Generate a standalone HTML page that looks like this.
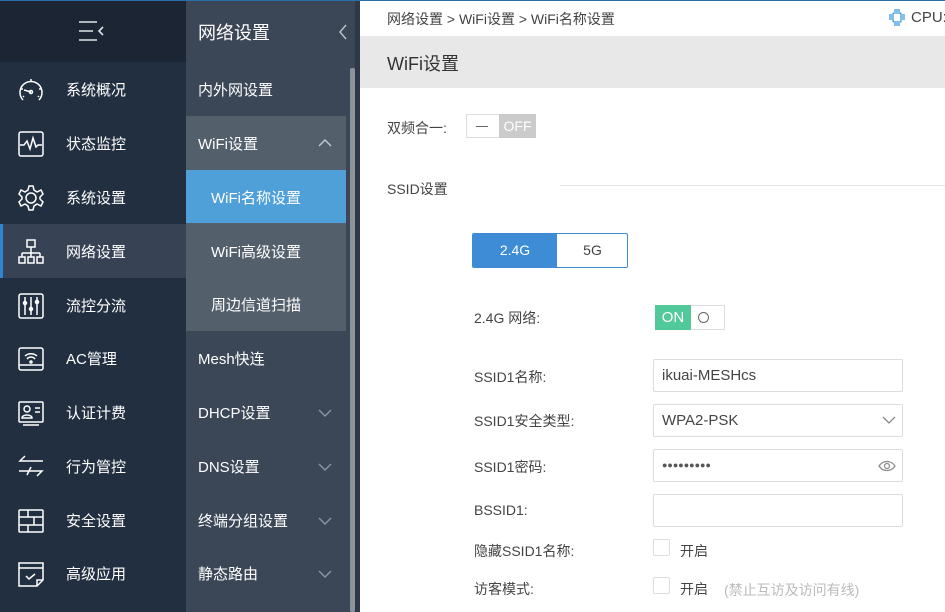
<!DOCTYPE html>
<html><head><meta charset="utf-8"><style>
*{margin:0;padding:0;box-sizing:border-box}
body{width:945px;height:612px;overflow:hidden;font-family:"Liberation Sans","Noto Sans CJK SC",sans-serif;position:relative;background:#fff}
.topline{position:absolute;left:0;top:0;width:945px;height:1px;background:#2a6fa8;z-index:5}
.c1{position:absolute;left:0;top:0;width:186px;height:612px;background:#222f40}
.c1h{position:absolute;left:0;top:0;width:186px;height:62px;background:#1b2534}
.r{position:absolute;left:0;width:186px;height:54px;color:#fff;font-size:15px;line-height:58px;padding-left:66px}
.r svg{position:absolute;left:17px;top:14px}
.sel{background:#374354;border-left:3px solid #2f86d0}
.c2{position:absolute;left:186px;top:0;width:174px;height:612px;background:#3b4656}
.s{position:absolute;left:0;width:160px;height:54px;color:#fff;font-size:15px;line-height:58px;padding-left:12px}
.s .ch{position:absolute;right:14px;top:20px}
.sb{position:absolute;left:350px;top:68px;width:5px;height:544px;background:#8d939a;border-radius:2px}
.main{position:absolute;left:360px;top:0;width:585px;height:612px;background:#fff;color:#333}
.lbl{position:absolute;font-size:14px;color:#444}
.inp{position:absolute;left:293px;width:250px;height:33px;border:1px solid #dcdcdc;border-radius:2px;font-size:15px;color:#444;line-height:31px;padding-left:8px}
</style></head><body>
<div class="topline"></div>
<div class="c1"></div><div class="c1h"></div>
<svg style="position:absolute;left:78px;top:20px" width="28" height="22" viewBox="0 0 28 22" fill="none" stroke="#dfe3e8" stroke-width="1.6"><path d="M1 2h18M1 11h14M1 20h18M25 7l-4 4 4 4"/></svg>
<div class="r" style="top:62px"><svg width="28" height="28" viewBox="0 0 28 28" fill="none" stroke="#fff" stroke-width="1.5"><path d="M6 24A11 11 0 1 1 22 24"/><path d="M14 3v3M4 13h2M22 13h2M7 20l-1 1M21 20l1 1M14 16L7 14"/><circle cx="14" cy="16" r="1.5"/></svg>系统概况</div>
<div class="r" style="top:116px"><svg width="28" height="28" viewBox="0 0 28 28" fill="none" stroke="#fff" stroke-width="1.5"><rect x="2" y="2" width="24" height="24" rx="2"/><path d="M3 15h4l3-4 3 8 3-11 3 9 2-2h4"/></svg>状态监控</div>
<div class="r" style="top:170px"><svg width="28" height="28" viewBox="0 0 28 28" fill="none" stroke="#fff" stroke-width="1.5"><circle cx="14" cy="14" r="5"/><path d="M12 2h4l1 4 3 2 4-2 2 4-3 3v2l3 3-2 4-4-2-3 2-1 4h-4l-1-4-3-2-4 2-2-4 3-3v-2L2 10l2-4 4 2 3-2z"/></svg>系统设置</div>
<div class="r sel" style="top:224px;padding-left:63px"><svg style="left:14px" width="28" height="28" viewBox="0 0 28 28" fill="none" stroke="#fff" stroke-width="1.5"><rect x="10" y="2" width="8" height="7"/><path d="M14 9v6M5 15h18M5 15v4M14 15v4M23 15v4"/><rect x="2" y="19" width="6" height="6"/><rect x="11" y="19" width="6" height="6"/><rect x="20" y="19" width="6" height="6"/></svg>网络设置</div>
<div class="r" style="top:278px"><svg width="28" height="28" viewBox="0 0 28 28" fill="none" stroke="#fff" stroke-width="1.5"><rect x="2" y="2" width="24" height="24" rx="2"/><path d="M8 5v18M14 5v18M20 5v18"/><circle cx="8" cy="11" r="1.5"/><circle cx="14" cy="17" r="1.5"/><circle cx="20" cy="10" r="1.5"/></svg>流控分流</div>
<div class="r" style="top:331px"><svg width="28" height="28" viewBox="0 0 28 28" fill="none" stroke="#fff" stroke-width="1.5"><rect x="2" y="3" width="24" height="22" rx="2"/><path d="M2 20h24M8 11a9 9 0 0 1 12 0M10 14a5 5 0 0 1 8 0"/><circle cx="14" cy="17" r="1"/></svg>AC管理</div>
<div class="r" style="top:385px"><svg width="28" height="28" viewBox="0 0 28 28" fill="none" stroke="#fff" stroke-width="1.5"><rect x="2" y="3" width="24" height="20" rx="1"/><circle cx="10" cy="10" r="3"/><path d="M5 19c0-4 10-4 10 0zM18 9h5M18 13h5M6 26h16"/></svg>认证计费</div>
<div class="r" style="top:439px"><svg width="28" height="28" viewBox="0 0 28 28" fill="none" stroke="#fff" stroke-width="1.5"><path d="M26 8H3l5-5M2 18h23l-5 5M14 14l-4 8"/></svg>行为管控</div>
<div class="r" style="top:493px"><svg width="28" height="28" viewBox="0 0 28 28" fill="none" stroke="#fff" stroke-width="1.5"><rect x="2" y="3" width="24" height="22" rx="1"/><path d="M2 10h24M2 18h24M11 3v7M17 10v8M11 18v7"/></svg>安全设置</div>
<div class="r" style="top:546px"><svg width="28" height="28" viewBox="0 0 28 28" fill="none" stroke="#fff" stroke-width="1.5"><path d="M2 3h24v17l-6 6H2z M2 8h24M20 26v-6h6M9 16l3 3 6-5"/></svg>高级应用</div>

<div class="c2"></div>
<div style="position:absolute;left:186px;top:116px;width:160px;height:215px;background:#545f6c"></div>
<div style="position:absolute;left:186px;top:170px;width:160px;height:53px;background:#4f9fd9"></div>
<div class="s" style="left:186px;top:4px;font-size:18px">网络设置<svg class="ch" style="top:20px;right:-2px" width="10" height="16" viewBox="0 0 10 16" fill="none" stroke="#bfc5cc" stroke-width="1.4"><path d="M8 1L2 8l6 7"/></svg></div>
<div class="s" style="left:186px;top:62px">内外网设置</div>
<div class="s" style="left:186px;top:116px">WiFi设置<svg class="ch" style="top:22px" width="14" height="9" viewBox="0 0 14 9" fill="none" stroke="#c7ccd2" stroke-width="1.4"><path d="M1 8l6-6 6 6"/></svg></div>
<div class="s" style="left:186px;top:170px;padding-left:25px">WiFi名称设置</div>
<div class="s" style="left:186px;top:224px;padding-left:25px">WiFi高级设置</div>
<div class="s" style="left:186px;top:277px;padding-left:25px">周边信道扫描</div>
<div class="s" style="left:186px;top:331px">Mesh快连</div>
<div class="s" style="left:186px;top:385px">DHCP设置<svg class="ch" style="top:24px" width="14" height="9" viewBox="0 0 14 9" fill="none" stroke="#8d96a1" stroke-width="1.4"><path d="M1 1l6 6 6-6"/></svg></div>
<div class="s" style="left:186px;top:439px">DNS设置<svg class="ch" style="top:24px" width="14" height="9" viewBox="0 0 14 9" fill="none" stroke="#8d96a1" stroke-width="1.4"><path d="M1 1l6 6 6-6"/></svg></div>
<div class="s" style="left:186px;top:493px">终端分组设置<svg class="ch" style="top:24px" width="14" height="9" viewBox="0 0 14 9" fill="none" stroke="#8d96a1" stroke-width="1.4"><path d="M1 1l6 6 6-6"/></svg></div>
<div class="s" style="left:186px;top:546px">静态路由<svg class="ch" style="top:24px" width="14" height="9" viewBox="0 0 14 9" fill="none" stroke="#8d96a1" stroke-width="1.4"><path d="M1 1l6 6 6-6"/></svg></div>
<div class="sb"></div>
<div style="position:absolute;left:355px;top:0;width:5px;height:612px;background:#2e3947"></div>

<div class="main">
<div style="position:absolute;left:27px;top:9px;font-size:14px;color:#444">网络设置 &gt; WiFi设置 &gt; WiFi名称设置</div>
<svg style="position:absolute;left:528px;top:8px" width="18" height="20" viewBox="0 0 18 20" fill="none" stroke="#3b9be0" stroke-width="1.3"><rect x="5" y="5" width="8" height="9" rx="1"/><path d="M7 1v3M9 1v3M11 1v3M7 15v3M9 15v3M11 15v3M1 7h3M1 9h3M1 11h3M14 7h3M14 9h3M14 11h3"/></svg>
<div style="position:absolute;left:551px;top:9px;font-size:15px;color:#444">CPU:</div>
<div style="position:absolute;left:0;top:36px;width:585px;height:52px;background:#e8e8e8"></div>
<div style="position:absolute;left:27px;top:50px;font-size:18px;color:#333">WiFi设置</div>
<div class="lbl" style="left:27px;top:118px">双频合一:</div>
<div style="position:absolute;left:106px;top:114px;width:70px;height:24px;border:1px solid #ddd;background:#fff"><div style="position:absolute;left:9px;top:11px;width:12px;height:1px;background:#666"></div><div style="position:absolute;left:32px;top:-1px;width:37px;height:24px;background:#cbcbcb;color:#fff;font-size:14px;line-height:24px;text-align:center">OFF</div></div>
<div class="lbl" style="left:27px;top:179px">SSID设置</div>
<div style="position:absolute;left:200px;top:185px;width:385px;height:1px;background:#e4e4e4"></div>
<div style="position:absolute;left:112px;top:233px;width:156px;height:35px;border:1px solid #3e8ad5;border-radius:2px;overflow:hidden"><div style="position:absolute;left:0;top:0;width:84px;height:33px;background:#3f8cd6;color:#fff;font-size:14px;line-height:33px;text-align:center">2.4G</div><div style="position:absolute;left:84px;top:0;width:71px;height:33px;color:#444;font-size:14px;line-height:33px;text-align:center">5G</div></div>
<div class="lbl" style="left:114px;top:308px">2.4G 网络:</div>
<div style="position:absolute;left:295px;top:305px;width:70px;height:25px;border:1px solid #ddd"><div style="position:absolute;left:-1px;top:-1px;width:36px;height:25px;background:#52c99a;color:#fff;font-size:15px;line-height:25px;text-align:center">ON</div><div style="position:absolute;left:42px;top:6px;width:11px;height:11px;border:1.3px solid #666;border-radius:50%"></div></div>
<div class="lbl" style="left:114px;top:367px">SSID1名称:</div>
<div class="inp" style="top:359px">ikuai-MESHcs</div>
<div class="lbl" style="left:114px;top:411px">SSID1安全类型:</div>
<div class="inp" style="top:404px">WPA2-PSK<svg style="position:absolute;right:6px;top:11px" width="14" height="9" viewBox="0 0 14 9" fill="none" stroke="#888" stroke-width="1.3"><path d="M1 1l6 6 6-6"/></svg></div>
<div class="lbl" style="left:114px;top:457px">SSID1密码:</div>
<div class="inp" style="top:449px;font-size:9px;letter-spacing:0px;color:#555">●●●●●●●●●<svg style="position:absolute;right:6px;top:10px" width="18" height="12" viewBox="0 0 18 12" fill="none" stroke="#888" stroke-width="1.2"><path d="M1 6c4-6 12-6 16 0c-4 6-12 6-16 0z"/><circle cx="9" cy="6" r="2.5"/></svg></div>
<div class="lbl" style="left:114px;top:502px">BSSID1:</div>
<div class="inp" style="top:494px"></div>
<div class="lbl" style="left:114px;top:541px">隐藏SSID1名称:</div>
<div style="position:absolute;left:293px;top:539px;width:17px;height:17px;border:1px solid #ddd;border-radius:2px"></div>
<div class="lbl" style="left:320px;top:541px">开启</div>
<div class="lbl" style="left:114px;top:579px">访客模式:</div>
<div style="position:absolute;left:293px;top:577px;width:17px;height:17px;border:1px solid #ddd;border-radius:2px"></div>
<div class="lbl" style="left:320px;top:579px">开启</div>
<div class="lbl" style="left:364px;top:580px;color:#bbb">(禁止互访及访问有线)</div>
</div>
</body></html>
